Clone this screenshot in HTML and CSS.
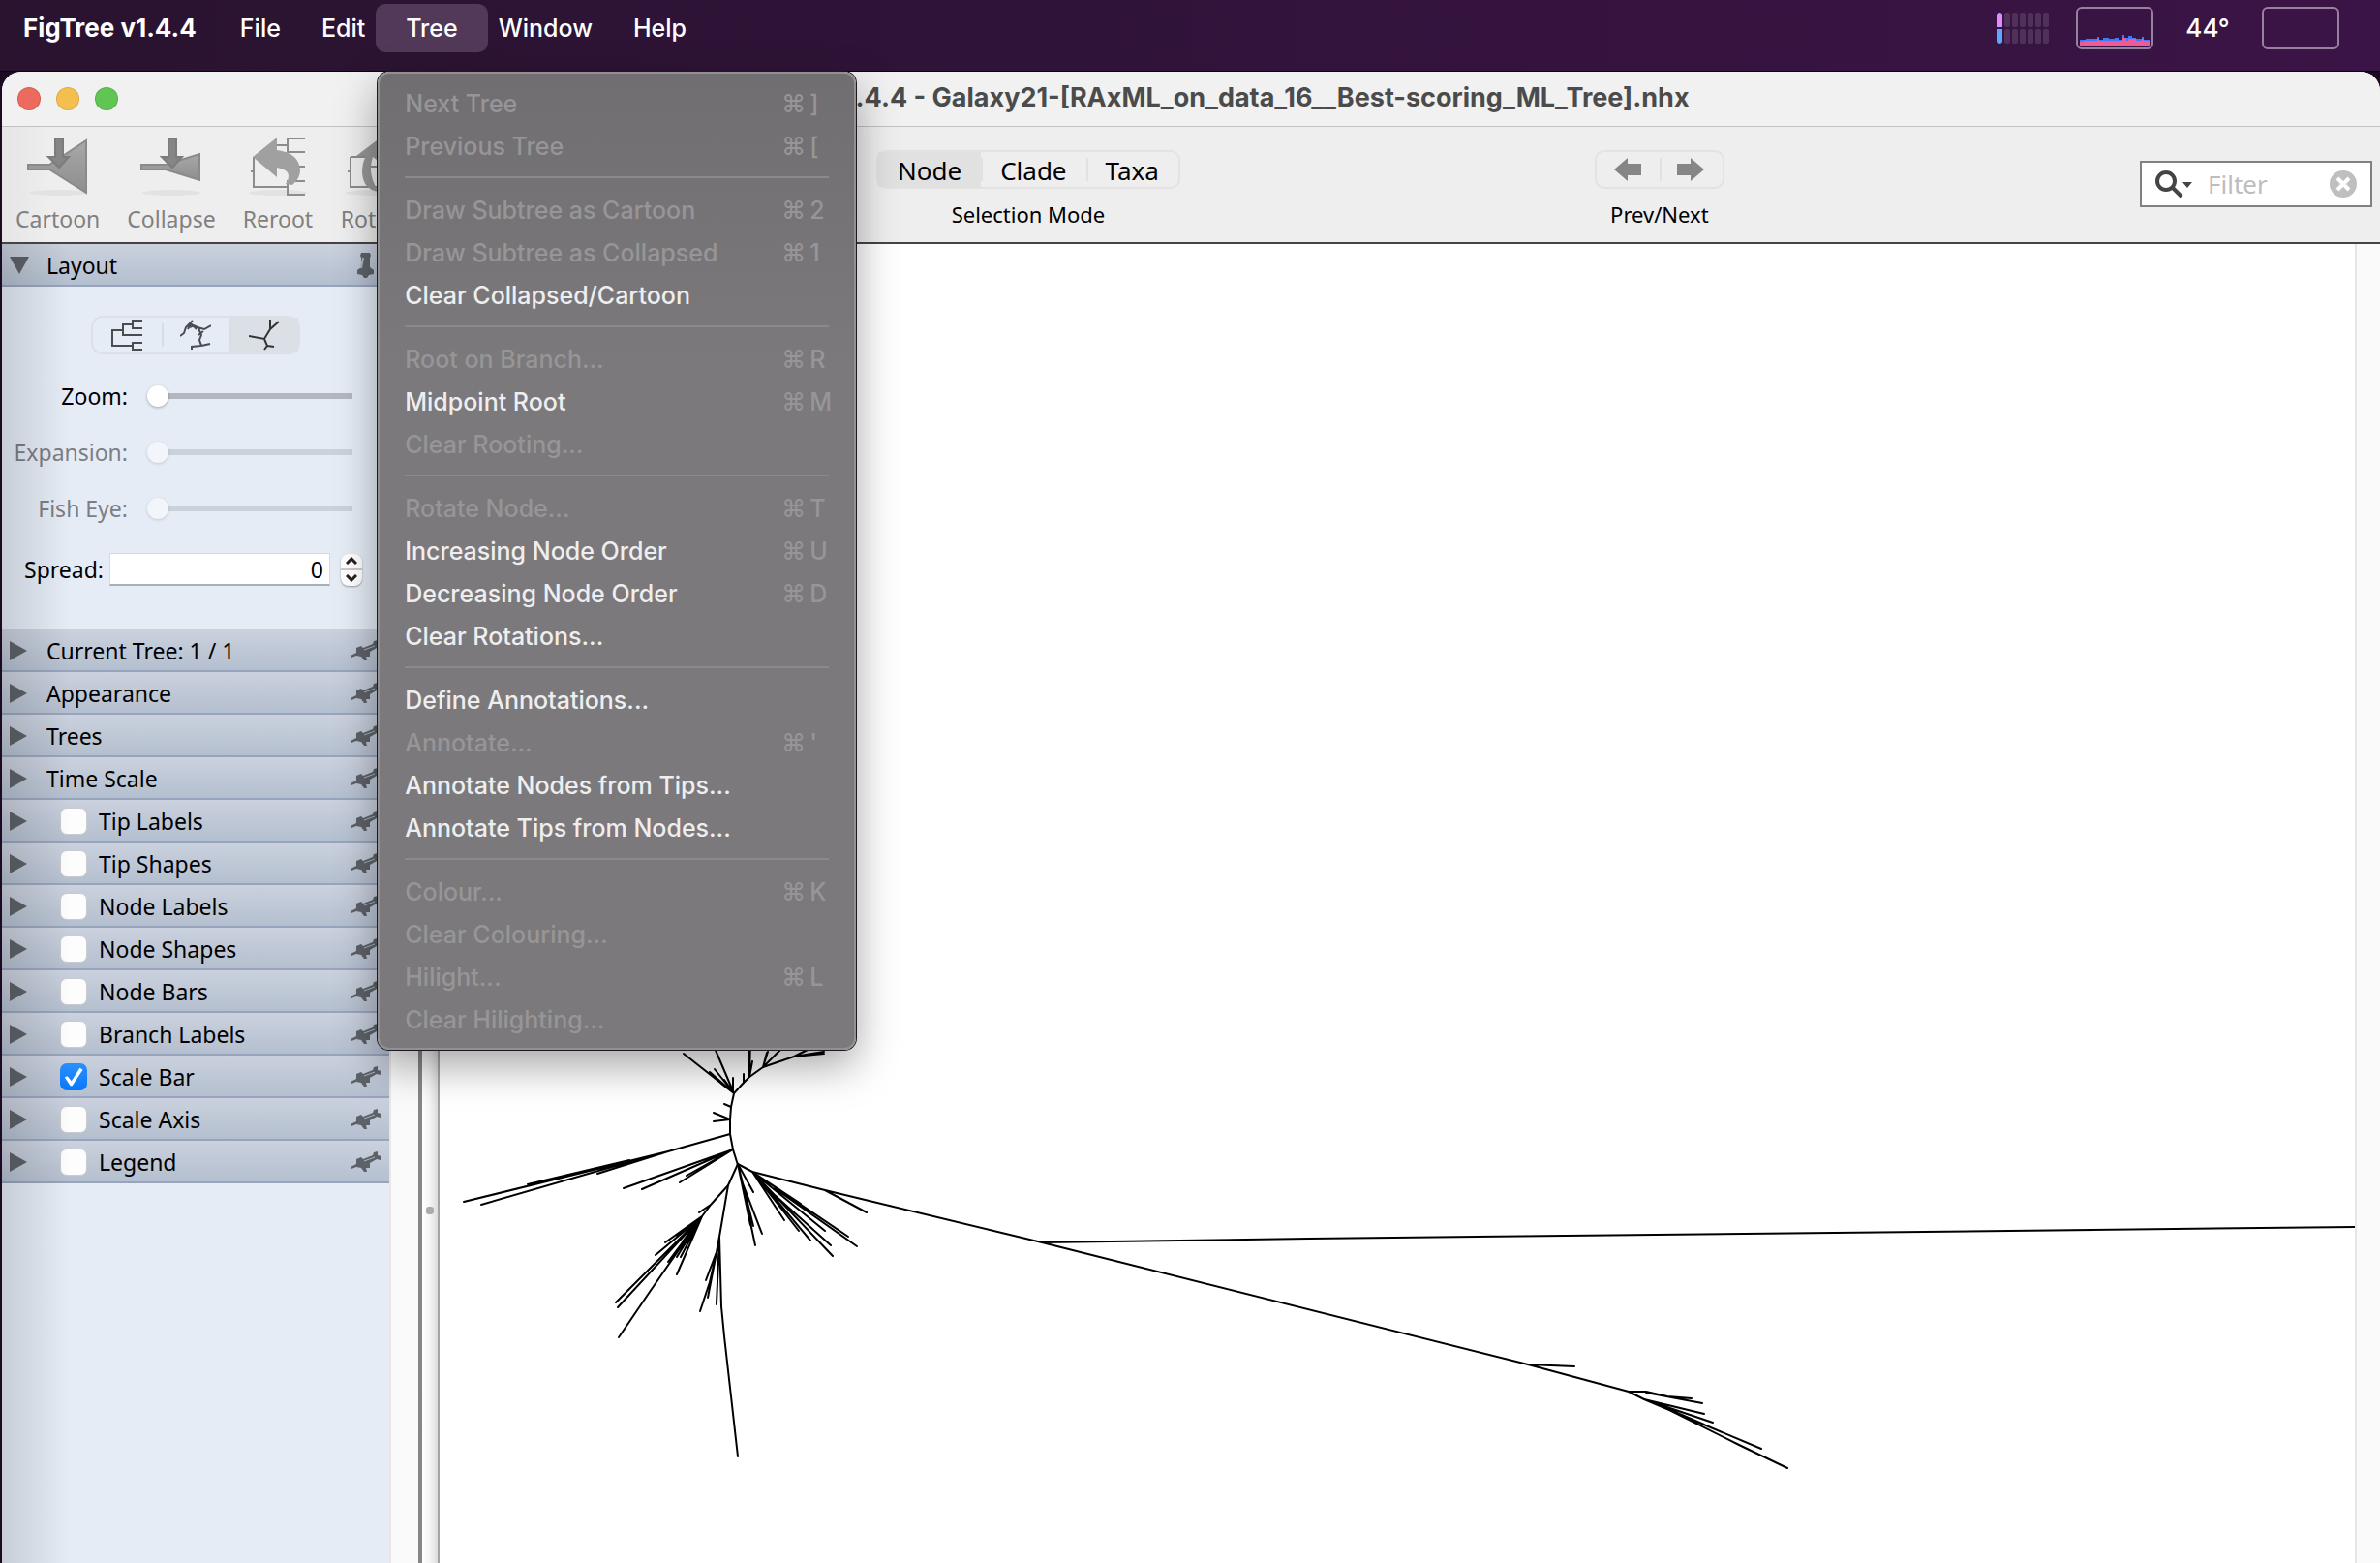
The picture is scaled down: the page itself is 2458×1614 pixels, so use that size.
FILE: index.html
```html
<!DOCTYPE html>
<html lang="en">
<head>
<meta charset="utf-8">
<title>FigTree v1.4.4</title>
<link rel="stylesheet" href="styles.css">
</head>
<body>
<svg class="defs" aria-hidden="true">
  <defs>
    <linearGradient id="metal" x1="0" y1="0" x2="0" y2="1"><stop offset="0" stop-color="#a8a8a8"/><stop offset="1" stop-color="#8e8e8e"/></linearGradient>
    <symbol id="pin" viewBox="0 0 32 22">
      <path d="M0 16 L6 13 L6 8 L11 6 L13 8 L23 4 L24 1 L28 0 L28 4 L32 5 L31 9 L27 8 L20 12 L20 17 L16 17 L17 21 L14 21 L11 17 L6 16 L1 18 Z" fill="#5d6268"/>
      <path d="M14 10 L25 6" stroke="#aab3c0" stroke-width="1"/>
    </symbol>
    <symbol id="pin-open" viewBox="0 0 20 26">
      <path d="M5 0 H14 L15 3 L14 5 V15 L18 18 L18 22 L13 23 L11 26 H8 L6 23 L1 22 V18 L5 15 V5 L4 3 Z" fill="#5d6268"/>
      <path d="M7 5 L5 16" stroke="#aab3c0" stroke-width="2"/>
    </symbol>
    <symbol id="closed" viewBox="0 0 18 20"><path d="M0 0 L18 10 L0 20 Z" fill="#5d6268"/></symbol>
    <symbol id="opened" viewBox="0 0 20 18"><path d="M0 0 H20 L10 18 Z" fill="#5d6268"/></symbol>
  </defs>
</svg>

<header class="menubar">
  <nav class="menus" aria-label="Menu bar">
    <a class="menu-title app" href="#">FigTree v1.4.4</a>
    <a class="menu-title" href="#">File</a>
    <a class="menu-title" href="#">Edit</a>
    <div class="menu-holder">
      <a class="menu-title open" href="#">Tree</a>
      <div class="menu">
        <button disabled><span>Next Tree</span><kbd><i>⌘</i>]</kbd></button>
        <button disabled><span>Previous Tree</span><kbd><i>⌘</i>[</kbd></button>
        <hr>
        <button disabled><span>Draw Subtree as Cartoon</span><kbd><i>⌘</i>2</kbd></button>
        <button disabled><span>Draw Subtree as Collapsed</span><kbd><i>⌘</i>1</kbd></button>
        <button><span>Clear Collapsed/Cartoon</span></button>
        <hr>
        <button disabled><span>Root on Branch...</span><kbd><i>⌘</i>R</kbd></button>
        <button><span>Midpoint Root</span><kbd><i>⌘</i>M</kbd></button>
        <button disabled><span>Clear Rooting...</span></button>
        <hr>
        <button disabled><span>Rotate Node...</span><kbd><i>⌘</i>T</kbd></button>
        <button><span>Increasing Node Order</span><kbd><i>⌘</i>U</kbd></button>
        <button><span>Decreasing Node Order</span><kbd><i>⌘</i>D</kbd></button>
        <button><span>Clear Rotations...</span></button>
        <hr>
        <button><span>Define Annotations...</span></button>
        <button disabled><span>Annotate...</span><kbd><i>⌘</i>'</kbd></button>
        <button><span>Annotate Nodes from Tips...</span></button>
        <button><span>Annotate Tips from Nodes...</span></button>
        <hr>
        <button disabled><span>Colour...</span><kbd><i>⌘</i>K</kbd></button>
        <button disabled><span>Clear Colouring...</span></button>
        <button disabled><span>Hilight...</span><kbd><i>⌘</i>L</kbd></button>
        <button disabled><span>Clear Hilighting...</span></button>
      </div>
    </div>
    <a class="menu-title" href="#">Window</a>
    <a class="menu-title" href="#">Help</a>
  </nav>
  <div class="status">
    <svg class="cores" width="54" height="32" viewBox="0 0 54 32" aria-hidden="true">
      <g fill="#4f315a">
        <rect x="8" width="6" height="15" rx="2"/><rect x="16" width="6" height="15" rx="2"/><rect x="24" width="6" height="15" rx="2"/><rect x="32" width="6" height="15" rx="2"/><rect x="40" width="6" height="15" rx="2"/><rect x="48" width="6" height="15" rx="2"/>
        <rect x="8" y="17" width="6" height="15" rx="2"/><rect x="16" y="17" width="6" height="15" rx="2"/><rect x="24" y="17" width="6" height="15" rx="2"/><rect x="32" y="17" width="6" height="15" rx="2"/><rect x="40" y="17" width="6" height="15" rx="2"/><rect x="48" y="17" width="6" height="15" rx="2"/>
      </g>
      <path d="M0 15 V3 Q0 0 3 0 T6 3 V15 Z" fill="#dc8cff"/>
      <path d="M0 17 V29 Q0 32 3 32 T6 29 V17 Z" fill="#5aa9ff"/>
    </svg>
    <div class="meter">
      <svg width="72" height="12" viewBox="0 0 72 12" aria-hidden="true">
        <path d="M0 12 V6 H6 V5 H18 V3 H20 V6 H24 V4 H30 V5 H36 V4 H40 V6 H44 V1 H46 V4 H50 V2 H54 V4 H58 V5 H64 V3 H66 V6 H72 V12 Z" fill="#3d7bfd"/>
        <path d="M0 12 V8 H4 V7 H18 V5 H20 V7 H44 V4 H48 V7 H50 V5 H58 V7 H64 V5 H66 V7 H72 V12 Z" fill="#ee5a96"/>
      </svg>
    </div>
    <span class="temp">44°</span>
    <div class="meter"></div>
  </div>
</header>

<main class="window">
  <div class="titlebar">
    <div class="lights"><button class="red" aria-label="Close"></button><button class="yellow" aria-label="Minimise"></button><button class="green" aria-label="Zoom window"></button></div>
    <h1>FigTree v1.4.4 - Galaxy21-[RAxML_on_data_16__Best-scoring_ML_Tree].nhx</h1>
  </div>

  <div class="toolbar">
    <div class="tools">
      <button class="tool" disabled>
        <svg width="64" height="64" viewBox="0 0 64 64" aria-hidden="true">
          <ellipse cx="32" cy="57" rx="30" ry="3" fill="#e2e2e2"/>
          <path d="M1 28 H23 L61 3 V57 L23 33 H1 Z" fill="url(#metal)" stroke="#8a8a8a" stroke-width="2"/>
          <path d="M29 1 H37 V20 H43 L33 31 L22 20 H29 Z" fill="#868686" stroke="#7c7c7c" stroke-width="2"/>
        </svg>
        Cartoon
      </button>
      <button class="tool" disabled>
        <svg width="64" height="64" viewBox="0 0 64 64" aria-hidden="true">
          <ellipse cx="32" cy="57" rx="30" ry="3" fill="#e2e2e2"/>
          <path d="M1 28 H26 L61 17 V44 L26 33 H1 Z" fill="url(#metal)" stroke="#8a8a8a" stroke-width="2"/>
          <path d="M29 1 H37 V20 H43 L33 31 L22 20 H29 Z" fill="#868686" stroke="#7c7c7c" stroke-width="2"/>
        </svg>
        Collapse
      </button>
      <button class="tool" disabled>
        <svg width="60" height="64" viewBox="0 0 60 64" aria-hidden="true">
          <ellipse cx="30" cy="57" rx="30" ry="3" fill="#e2e2e2"/>
          <path d="M58 1 H40 V15 H58 M40 8 H28 M58 30 H28 M5 20 V51 H40 M2 35 H5 M58 45 H40 V59 H58" fill="none" stroke="#8c8c8c" stroke-width="2"/>
          <path d="M4 20 L29 0 V13 Q52 16 53 34 Q53 42 45 49 L38 48 Q47 34 29 31 V41 Z" fill="#a0a0a0"/>
        </svg>
        Reroot
      </button>
      <button class="tool" disabled>
        <svg width="60" height="64" viewBox="0 0 60 64" aria-hidden="true">
          <ellipse cx="30" cy="57" rx="30" ry="3" fill="#e2e2e2"/>
          <path d="M56 1 H40 V15 H56 M56 30 H20 M5 20 V51 H40 M5 20 H24 M2 35 H5 M56 45 H40 V59 H56" fill="none" stroke="#8c8c8c" stroke-width="2"/>
          <path d="M11 19 L36 0 V26 L28 20 Q22 38 34 56 Q18 54 17 36 Q17 26 21 19 Z" fill="#969696"/>
        </svg>
        Rotate
      </button>
    </div>
    <div class="group mode">
      <div class="segmented"><button class="on" aria-pressed="true">Node</button><button>Clade</button><button>Taxa</button></div>
      <span>Selection Mode</span>
    </div>
    <div class="group step">
      <div class="segmented">
        <button aria-label="Previous"><svg width="28" height="24" viewBox="0 0 28 24"><path d="M0 12 L14 0 V6 H28 V18 H14 V24 Z" fill="#868686"/></svg></button>
        <button aria-label="Next"><svg width="28" height="24" viewBox="0 0 28 24"><path d="M28 12 L14 0 V6 H0 V18 H14 V24 Z" fill="#868686"/></svg></button>
      </div>
      <span>Prev/Next</span>
    </div>
    <div class="search">
      <svg width="38" height="28" viewBox="0 0 38 28" aria-hidden="true"><circle cx="11" cy="11" r="9" fill="none" stroke="#444" stroke-width="4"/><path d="M18 18 L27 27" stroke="#444" stroke-width="4"/><path d="M28 12 H38 L33 18 Z" fill="#444"/></svg>
      <input type="text" placeholder="Filter" aria-label="Filter">
      <button aria-label="Clear filter"><svg width="28" height="28" viewBox="0 0 28 28"><circle cx="14" cy="14" r="14" fill="#bfbfbf"/><path d="M8 8 L20 20 M20 8 L8 20" stroke="#fff" stroke-width="4"/></svg></button>
    </div>
  </div>

  <div class="body">
    <aside class="sidebar">
      <div class="row"><svg class="arrow" width="20" height="18"><use href="#opened"/></svg><span>Layout</span><svg class="pin" width="32" height="26"><use href="#pin-open"/></svg></div>
      <div class="layout">
        <div class="segmented shapes">
          <button aria-label="Rectangular"><svg width="32" height="32" viewBox="0 0 32 32"><path d="M11 11 H1 V27 H22 M22 5 H12 V16 H32 M32 1 H22 V9 H32 M32 24 H22 V31 H32" fill="none" stroke="#4a4c50" stroke-width="2"/></svg></button>
          <button aria-label="Polar"><svg width="32" height="32" viewBox="0 0 32 32"><path d="M0 17 L4 14 L6 8 L13 1 M10 8 L14 6 L18 8 L25 10 L32 6 M8 10 L11 4 L17 10 M19 9 L22 16 L20 21 L22 27 L12 28 V31 M22 27 L31 25 M19 16 L24 12" fill="none" stroke="#4a4c50" stroke-width="2"/></svg></button>
          <button class="on" aria-label="Radial" aria-pressed="true"><svg width="32" height="32" viewBox="0 0 32 32"><path d="M0 17 L16 20 L22 10 L31 2 M22 10 V0 M16 20 L19 27 L16 31 M19 27 L26 28" fill="none" stroke="#333" stroke-width="2"/></svg></button>
        </div>
        <label class="slider"><span>Zoom:</span><input type="range" min="0" max="100" value="0"></label>
        <label class="slider"><span>Expansion:</span><input type="range" min="0" max="100" value="0" disabled></label>
        <label class="slider"><span>Fish Eye:</span><input type="range" min="0" max="100" value="0" disabled></label>
        <div class="spread">
          <label for="spread">Spread:</label><input id="spread" type="text" value="0">
          <div class="stepper"><button aria-label="More"><svg width="12" height="8" viewBox="0 0 12 8"><path d="M1 7 L6 2 L11 7" fill="none" stroke="#222" stroke-width="3"/></svg></button><button aria-label="Less"><svg width="12" height="8" viewBox="0 0 12 8"><path d="M1 1 L6 6 L11 1" fill="none" stroke="#222" stroke-width="3"/></svg></button></div>
        </div>
      </div>
      <div class="row"><svg class="arrow" width="18" height="20"><use href="#closed"/></svg><span>Current Tree: 1 / 1</span><svg class="pin" width="32" height="22"><use href="#pin"/></svg></div>
      <div class="row"><svg class="arrow" width="18" height="20"><use href="#closed"/></svg><span>Appearance</span><svg class="pin" width="32" height="22"><use href="#pin"/></svg></div>
      <div class="row"><svg class="arrow" width="18" height="20"><use href="#closed"/></svg><span>Trees</span><svg class="pin" width="32" height="22"><use href="#pin"/></svg></div>
      <div class="row"><svg class="arrow" width="18" height="20"><use href="#closed"/></svg><span>Time Scale</span><svg class="pin" width="32" height="22"><use href="#pin"/></svg></div>
      <div class="row"><svg class="arrow" width="18" height="20"><use href="#closed"/></svg><label><input type="checkbox">Tip Labels</label><svg class="pin" width="32" height="22"><use href="#pin"/></svg></div>
      <div class="row"><svg class="arrow" width="18" height="20"><use href="#closed"/></svg><label><input type="checkbox">Tip Shapes</label><svg class="pin" width="32" height="22"><use href="#pin"/></svg></div>
      <div class="row"><svg class="arrow" width="18" height="20"><use href="#closed"/></svg><label><input type="checkbox">Node Labels</label><svg class="pin" width="32" height="22"><use href="#pin"/></svg></div>
      <div class="row"><svg class="arrow" width="18" height="20"><use href="#closed"/></svg><label><input type="checkbox">Node Shapes</label><svg class="pin" width="32" height="22"><use href="#pin"/></svg></div>
      <div class="row"><svg class="arrow" width="18" height="20"><use href="#closed"/></svg><label><input type="checkbox">Node Bars</label><svg class="pin" width="32" height="22"><use href="#pin"/></svg></div>
      <div class="row"><svg class="arrow" width="18" height="20"><use href="#closed"/></svg><label><input type="checkbox">Branch Labels</label><svg class="pin" width="32" height="22"><use href="#pin"/></svg></div>
      <div class="row"><svg class="arrow" width="18" height="20"><use href="#closed"/></svg><label><input type="checkbox" checked>Scale Bar</label><svg class="pin" width="32" height="22"><use href="#pin"/></svg></div>
      <div class="row"><svg class="arrow" width="18" height="20"><use href="#closed"/></svg><label><input type="checkbox">Scale Axis</label><svg class="pin" width="32" height="22"><use href="#pin"/></svg></div>
      <div class="row"><svg class="arrow" width="18" height="20"><use href="#closed"/></svg><label><input type="checkbox">Legend</label><svg class="pin" width="32" height="22"><use href="#pin"/></svg></div>
    </aside>
    <div class="gutter"></div>
    <div class="splitter"><i></i></div>
    <section class="canvas" aria-label="Tree view">
      <svg viewBox="454 252 1978 1362" preserveAspectRatio="xMinYMin slice" fill="none" stroke="#000" stroke-width="2" stroke-linecap="round" stroke-linejoin="round">
        <!-- trunk -->
        <path d="M788 1102 L774 1112 L768 1118 L758 1129 L755 1143 L754 1156 L754 1171 L757 1187 L762 1203"/>
        <!-- upper crown -->
        <path d="M758 1129 L706 1088 M758 1129 L733 1107 M758 1129 L735 1075 M757 1127 L757 1113 M758 1129 L738 1104 M758 1129 L745 1119 M758 1129 L748 1115 M768 1118 V1109 M774 1112 L773 1075 M774 1112 L775 1075 M774 1112 L777 1096 M788 1102 L793 1086 M788 1102 L792 1087 M788 1102 L810 1080 M788 1102 L820 1091 L838 1082 M820 1091 L851 1086 M820 1091 L851 1088 M755 1143 L748 1140 M754 1156 L737 1149 M754 1156 L737 1158"/>
        <!-- left clades -->
        <path d="M754 1171 L690 1189 L479 1241 M690 1189 L617 1212 M670 1194 L497 1244 M650 1198 L545 1223 M757 1187 L644 1227 M757 1187 L663 1228 M757 1187 L709 1214 M757 1187 L702 1221"/>
        <!-- lower clades -->
        <path d="M762 1202 L752 1224 L734 1244 L725 1256 M734 1244 L722 1252 M725 1256 L687 1283 M725 1256 L677 1296 M725 1256 L699 1276 M725 1256 L636 1345 M725 1256 L638 1350 M725 1256 L671 1334 L639 1381 M725 1256 L690 1303 M725 1256 L699 1316 M725 1256 L699 1298 M725 1256 L703 1298 M725 1256 L705 1282"/>
        <path d="M752 1224 L743 1277 L745 1349 L748 1380 L762 1504 M743 1277 L740 1293 L729 1322 M740 1293 L731 1340 M733 1324 L723 1354 M743 1277 L740 1347 M740 1293 L733 1324"/>
        <path d="M762 1202 L778 1231 M762 1202 L775 1265 M762 1202 L767 1222 L778 1266 M767 1222 L787 1274 M765 1215 L780 1286"/>
        <path d="M777 1210 L810 1260 M777 1210 L825 1271 M790 1225 L837 1281 M777 1210 L860 1297 M790 1225 L858 1286 M777 1210 L852 1271 M777 1210 L827 1243 M777 1210 L876 1277 M800 1227 L885 1287"/>
        <!-- long branches -->
        <path d="M762 1202 L777 1210 L852 1229 L1076 1283 L1578 1409 L1682 1437 L1698 1445 M852 1229 L895 1252 M1076 1283 L1352 1279 L2432 1267 M1578 1409 L1626 1411"/>
        <path d="M1682 1437 H1700 L1722 1442 L1747 1444 M1700 1438 L1758 1449 M1698 1445 L1760 1460 M1698 1445 L1769 1469 M1698 1445 L1730 1458 L1760 1471 M1698 1445 L1819 1496 M1710 1449 L1796 1492 L1846 1516"/>
      </svg>
    </section>
    <div class="scrollbar"></div>
  </div>
</main>
</body>
</html>
```
FILE: styles.css
```css
* { box-sizing: border-box; }

body {
  margin: 0;
  min-height: 100vh;
  display: flex;
  flex-direction: column;
  background: #1b0b22;
  color: #000;
  font: 23px/28px "Noto Sans", "Open Sans", sans-serif;
  overflow: hidden;
}

button {
  margin: 0;
  padding: 0;
  border: 0;
  background: none;
  color: inherit;
  font: inherit;
}

svg { display: block; flex: none; }
.defs { position: absolute; width: 0; height: 0; }

/* System menu bar */
.menubar {
  height: 74px;
  padding: 4px 42px 0 3px;
  display: flex;
  align-items: flex-start;
  justify-content: space-between;
  background: linear-gradient(90deg, #29132f, #3a1446);
  border-bottom: 1px solid #0c0310;
  color: #fff;
  font: 500 26px/50px Inter, sans-serif;
}
.menus { display: flex; font-size: 25px; }
.menu-title {
  display: block;
  padding: 0 21px;
  color: #fff;
  text-decoration: none;
}
.menu-title.app { padding-right: 24px; font-size: 26px; font-weight: 700; }
.menu-title.open {
  margin: 0 -10px;
  padding: 0 31px;
  border-radius: 10px;
  background: #523959;
}
.menu-holder { position: relative; }

.status { display: flex; align-items: center; height: 50px; }
.meter {
  width: 80px;
  height: 44px;
  padding: 0 2px 2px;
  display: flex;
  align-items: flex-end;
  border: 2px solid #98819f;
  border-radius: 6px;
}
.cores { margin-right: 28px; }
.temp { width: 112px; text-align: center; }

/* Drop-down menu */
.menu {
  position: absolute;
  z-index: 10;
  top: 70px;
  left: -8px;
  width: 494px;
  padding: 9px 0 7px;
  border: 2px solid #929092;
  border-radius: 12px;
  background: linear-gradient(#716e71, #7b797c 30%, #7b797c);
  box-shadow: 0 0 0 1px #1c1a1d, 0 16px 44px rgba(0, 0, 0, .36);
  font: 500 25px/44px Inter, sans-serif;
}
.menu button {
  width: 100%;
  height: 44px;
  padding-left: 26px;
  display: flex;
  justify-content: space-between;
  text-align: left;
  color: #efeeef;
}
.menu button:disabled, .menu kbd { color: #979597; }
.menu kbd {
  width: 75px;
  display: flex;
  font: inherit;
}
.menu i { width: 29px; font-style: normal; }
.menu hr {
  height: 2px;
  margin: 9px 26px 11px;
  border: 0;
  background: #8b898c;
}

/* Application window */
.window {
  flex: 1;
  margin-left: 2px;
  display: flex;
  flex-direction: column;
  border-radius: 20px 20px 0 0;
  background: #fff;
  overflow: hidden;
}
.titlebar {
  height: 57px;
  padding: 0 16px;
  display: grid;
  grid-template-columns: 1fr auto 1fr;
  align-items: center;
  background: #f1f1f1;
  border-bottom: 1px solid #c2c2c2;
}
.lights { display: flex; gap: 16px; }
.lights button { width: 24px; height: 24px; border: 1px solid rgba(0, 0, 0, .1); border-radius: 50%; }
.red { background: #ed6a5e; }
.yellow { background: #f5bf4f; }
.green { background: #61c554; }
h1 {
  margin: 0;
  padding: 0 0 2px 36px;
  color: #4b4b4b;
  font: 700 27px/36px Inter, sans-serif;
}

.toolbar {
  height: 121px;
  padding-right: 8px;
  display: flex;
  align-items: flex-start;
  background: linear-gradient(90deg, rgba(0, 0, 0, .04), transparent 50px), #eee;
  border-bottom: 2px solid #444;
}
.tools {
  width: 903px;
  padding: 11px 0 0 14px;
  display: flex;
  gap: 28px;
}
.tool {
  min-width: 72px;
  display: flex;
  flex-direction: column;
  align-items: center;
  gap: 6px;
  color: #808080;
}
.group {
  padding-top: 24px;
  display: flex;
  flex-direction: column;
  align-items: center;
  gap: 12px;
  font-size: 22px;
}
.step { margin-left: 428px; }
.segmented {
  height: 40px;
  display: flex;
  border: 2px solid #e3e3e3;
  border-radius: 10px;
  font-size: 26px;
}
.segmented button {
  display: flex;
  align-items: center;
  justify-content: center;
  position: relative;
}
.mode button { padding: 2px 20px 0; }
.step button { width: 65px; }
.segmented button + button::before {
  content: "";
  position: absolute;
  left: 0;
  top: 6px;
  bottom: 6px;
  width: 2px;
  background: #e1e1e1;
}
.segmented .on { background: #e1e1e1; }

.search {
  width: 240px;
  height: 48px;
  margin: 35px 0 0 auto;
  padding: 0 14px;
  display: flex;
  align-items: center;
  background: #fff;
  border: 2px solid #808080;
}
.search input {
  flex: 1;
  min-width: 0;
  padding: 0 0 0 16px;
  border: 0;
  background: none;
  font: inherit;
  font-size: 26px;
}
.search ::placeholder { color: #bdbdbd; opacity: 1; }

.body { flex: 1; display: flex; min-height: 0; }

/* Sidebar */
.sidebar {
  width: 400px;
  flex: none;
  background: #e5ecf6;
  position: relative;
}
.sidebar::after {
  content: "";
  position: absolute;
  inset: 0 auto 0 0;
  width: 70px;
  background: linear-gradient(90deg, rgba(0, 0, 0, .13), transparent);
  pointer-events: none;
}
.row {
  height: 44px;
  padding: 2px 8px 0;
  display: grid;
  grid-template-columns: 38px 1fr 32px;
  align-items: center;
  background: linear-gradient(#cbd1de, #b4bfcf);
  border-bottom: 2px solid #98a4bb;
}
.row label { padding-left: 14px; display: flex; align-items: center; gap: 12px; }
input[type="checkbox"] {
  appearance: none;
  width: 28px;
  height: 28px;
  margin: 0;
  border: 1px solid #c9cbce;
  border-radius: 7px;
  background: #fdfdfd;
}
input[type="checkbox"]:checked { border: 0; background: linear-gradient(#2a90ff, #0a78fb); }
input[type="checkbox"]:checked::before {
  content: "";
  display: block;
  height: 28px;
  background: #fff;
  clip-path: polygon(17% 52%, 27% 47%, 42% 65%, 73% 17%, 84% 24%, 45% 83%, 38% 83%);
}

.layout {
  height: 354px;
  padding-top: 30px;
  display: flex;
  flex-direction: column;
}
.shapes { width: 216px; margin: 0 0 14px 92px; border-color: #dce1e8; border-radius: 12px; }
.shapes button { flex: 1; }
.shapes .on { background: #dbe0e7; }
.shapes button + button::before { background: #d7dde6; }
.slider {
  height: 58px;
  display: flex;
  align-items: center;
  gap: 20px;
}
.slider span { width: 130px; text-align: right; }
.slider:has(:disabled) { color: #7b7e84; }
input[type="range"] {
  appearance: none;
  width: 212px;
  height: 24px;
  margin: 0;
  background: linear-gradient(#b2b7c1, #b2b7c1) 12px 9px / 200px 6px no-repeat;
}
input[type="range"]::-webkit-slider-thumb {
  appearance: none;
  width: 22px;
  height: 22px;
  border-radius: 50%;
  background: #fff;
  box-shadow: 0 1px 3px rgba(0, 0, 0, .3);
}
input[type="range"]:disabled { opacity: .5; }
.spread { height: 68px; padding-left: 23px; display: flex; align-items: center; }
.spread input {
  width: 228px;
  height: 34px;
  margin: 0 11px 0 6px;
  padding: 0 6px;
  border: 1px solid #d5d9e0;
  border-bottom: 2px solid #a9afb9;
  background: #fff;
  font: inherit;
  text-align: right;
}
.stepper {
  width: 22px;
  height: 33px;
  display: flex;
  flex-direction: column;
  border-radius: 8px;
  background: #fff;
  box-shadow: 0 1px 2px rgba(0, 0, 0, .35);
}
.stepper button { flex: 1; display: grid; place-items: center; }
.stepper button + button { border-top: 2px solid #ccc; }

/* Panes */
.gutter { width: 30px; flex: none; background: #fafafa; border-left: 2px solid #e9e7e6; }
.splitter {
  width: 22px;
  flex: none;
  display: grid;
  place-items: center;
  padding-top: 634px;
  border-left: 4px solid #868686;
  border-right: 2px solid #a4a4a4;
  background: linear-gradient(90deg, #fff, #f4f4f4 50%, #dcdcdc);
}
.splitter i { width: 8px; height: 8px; border-radius: 3px; background: #aaa; }
.canvas { flex: 1; min-width: 0; overflow: hidden; }
.canvas svg { width: 100%; height: 100%; }
.scrollbar { width: 26px; flex: none; border-left: 2px solid #e6e6e6; background: #fafafa; }
```
